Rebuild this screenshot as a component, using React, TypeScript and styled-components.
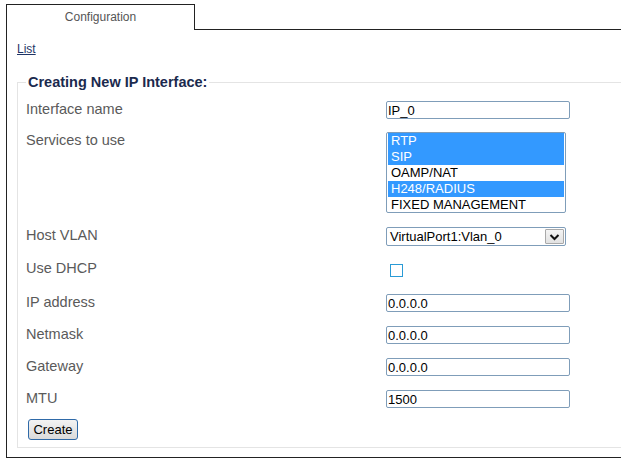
import React from "react";
import styled, { createGlobalStyle } from "styled-components";

const GlobalStyle = createGlobalStyle`
  html, body {
    margin: 0;
    padding: 0;
    overflow: hidden;
    background: #ffffff;
    font-family: "Liberation Sans", Arial, sans-serif;
  }
`;

const Page = styled.div`
  padding: 4px 0 0 6px;
  width: 660px;
`;

const TabBar = styled.div`
  display: flex;
  height: 26px;
`;

const Tab = styled.div`
  box-sizing: border-box;
  width: 189px;
  height: 26px;
  border: 1px solid #222;
  border-bottom: none;
  text-align: center;
  font-size: 12px;
  line-height: 24px;
  color: #555;
`;

const TabFill = styled.div`
  flex: 1;
  border-bottom: 1px solid #222;
`;

const Panel = styled.div`
  border: 1px solid #222;
  border-top: none;
  padding: 12px 0 9px 10px;
`;

const ListLink = styled.a`
  display: block;
  width: max-content;
  font-size: 12px;
  line-height: 14px;
  color: #1f3566;
  text-decoration: underline;
  cursor: pointer;
`;

const Fieldset = styled.fieldset`
  margin: 18px 0 0 0;
  border: 1px solid #e4e4e4;
  padding: 4px 0 7px 8px;
  min-width: 0;
`;

const Legend = styled.legend`
  margin-left: 0;
  padding: 0 2px;
  font-size: 14.5px;
  line-height: 16px;
  font-weight: bold;
  color: #1b2a4e;
`;

const Row = styled.div`
  display: grid;
  grid-template-columns: 360px auto;
  align-items: start;
  padding: 7px 0;
`;

const Label = styled.div<{ $offset?: number }>`
  font-size: 14.5px;
  line-height: 16px;
  color: #5a5a5a;
  margin-top: ${(p) => p.$offset ?? 0}px;
`;

const TextInput = styled.input`
  box-sizing: border-box;
  width: 184px;
  height: 18px;
  margin: 0;
  padding: 0 1px;
  border: 1px solid #7f9db9;
  border-radius: 2px;
  font-family: "Liberation Sans", Arial, sans-serif;
  font-size: 13px;
  color: #000;
  outline: none;
`;

const ListBox = styled.div`
  box-sizing: border-box;
  width: 180px;
  height: 81px;
  margin-top: -1px;
  border: 1px solid #7f9db9;
  border-radius: 2px;
  padding: 0 1px;
  overflow: hidden;
`;

const ListOption = styled.div<{ $selected?: boolean }>`
  height: 16px;
  line-height: 16px;
  font-size: 13px;
  padding-left: 3px;
  background: ${(p) => (p.$selected ? "#3399ff" : "transparent")};
  color: ${(p) => (p.$selected ? "#ffffff" : "#000000")};
  white-space: nowrap;
`;

const SelectBox = styled.div`
  box-sizing: border-box;
  width: 180px;
  height: 19px;
  border: 1px solid #7f9db9;
  border-radius: 2px;
  display: flex;
  align-items: center;
  padding: 0 1px 0 3px;
`;

const SelectText = styled.span`
  flex: 1;
  font-size: 13px;
  line-height: 17px;
  color: #000;
`;

const SelectArrow = styled.span`
  box-sizing: border-box;
  width: 19px;
  height: 15px;
  border: 1px solid #a9a9a9;
  border-radius: 1px;
  background: linear-gradient(#f4f4f4, #e2e2e2);
  display: flex;
  align-items: center;
  justify-content: center;
`;

const CheckBox = styled.input`
  appearance: none;
  -webkit-appearance: none;
  box-sizing: border-box;
  width: 13px;
  height: 13px;
  margin: 4px 0 3px 4px;
  border: 1px solid #2a9bd6;
  background: #fff;
  display: block;
`;

const ButtonRow = styled.div`
  margin-top: 4px;
  padding-left: 2px;
`;

const Button = styled.button`
  box-sizing: border-box;
  width: 50px;
  height: 21px;
  padding: 0;
  border: 1px solid #2f6aa8;
  border-radius: 3px;
  background: linear-gradient(#f3f3f3, #dadada);
  font-family: "Liberation Sans", Arial, sans-serif;
  font-size: 13px;
  color: #000;
`;

const services = [
  { name: "RTP", selected: true },
  { name: "SIP", selected: true },
  { name: "OAMP/NAT", selected: false },
  { name: "H248/RADIUS", selected: true },
  { name: "FIXED MANAGEMENT", selected: false },
];

const textRows = [
  { label: "IP address", value: "0.0.0.0" },
  { label: "Netmask", value: "0.0.0.0" },
  { label: "Gateway", value: "0.0.0.0" },
  { label: "MTU", value: "1500" },
];

export default function App() {
  return (
    <>
      <GlobalStyle />
      <Page>
        <TabBar>
          <Tab>Configuration</Tab>
          <TabFill />
        </TabBar>
        <Panel>
          <ListLink>List</ListLink>
          <Fieldset>
            <Legend>Creating New IP Interface:</Legend>
            <Row>
              <Label>Interface name</Label>
              <TextInput defaultValue="IP_0" />
            </Row>
            <Row>
              <Label $offset={-1}>Services to use</Label>
              <ListBox role="listbox" aria-multiselectable="true">
                {services.map((s) => (
                  <ListOption key={s.name} $selected={s.selected} role="option" aria-selected={s.selected}>
                    {s.name}
                  </ListOption>
                ))}
              </ListBox>
            </Row>
            <Row>
              <Label>Host VLAN</Label>
              <SelectBox>
                <SelectText>VirtualPort1:Vlan_0</SelectText>
                <SelectArrow>
                  <svg width="11" height="8" viewBox="0 0 11 8">
                    <path d="M1.5 2 L5.5 6 L9.5 2" fill="none" stroke="#111" strokeWidth="2" />
                  </svg>
                </SelectArrow>
              </SelectBox>
            </Row>
            <Row>
              <Label>Use DHCP</Label>
              <CheckBox type="checkbox" />
            </Row>
            {textRows.map((r) => (
              <Row key={r.label}>
                <Label>{r.label}</Label>
                <TextInput defaultValue={r.value} />
              </Row>
            ))}
            <ButtonRow>
              <Button>Create</Button>
            </ButtonRow>
          </Fieldset>
        </Panel>
      </Page>
    </>
  );
}
